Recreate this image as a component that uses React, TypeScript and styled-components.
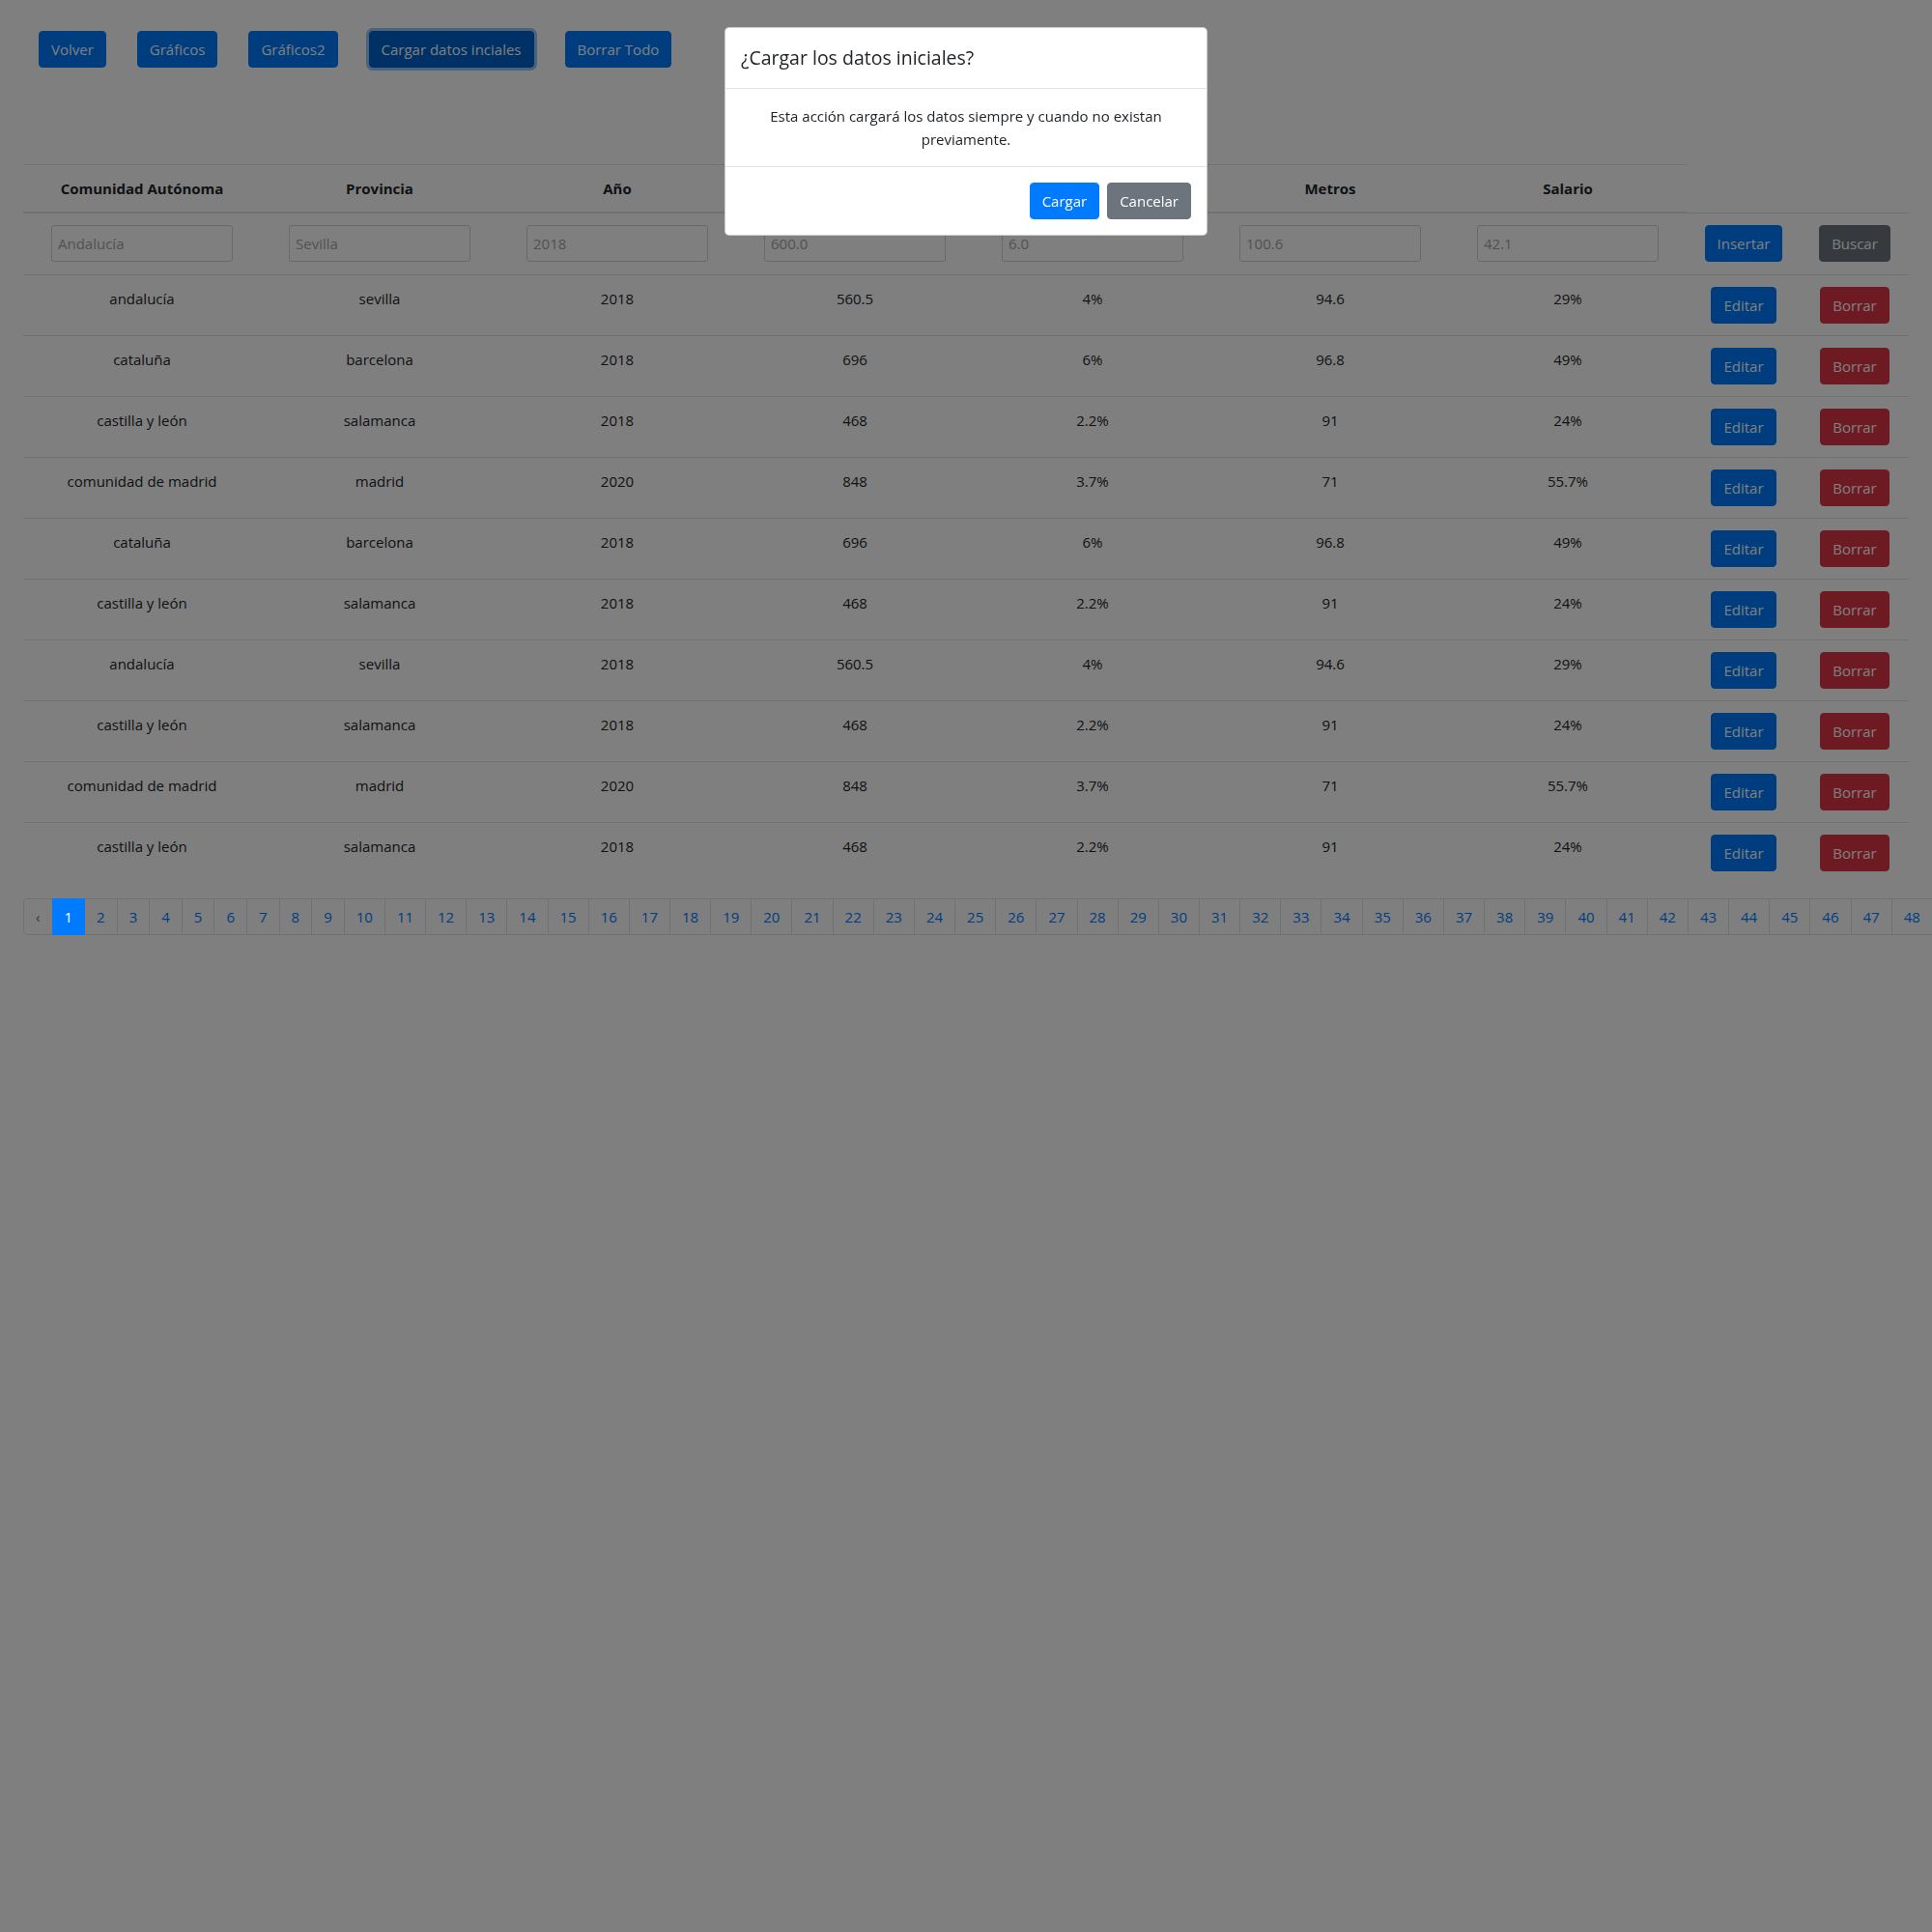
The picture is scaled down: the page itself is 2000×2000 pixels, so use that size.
import React from "react";
import styled, { createGlobalStyle, css } from "styled-components";

const GlobalStyle = createGlobalStyle`
  html, body {
    margin: 0;
    padding: 0;
    overflow: hidden;
    background: #ffffff;
  }
  body {
    font-family: "Open Sans", "Noto Sans", sans-serif;
    font-size: 15px;
    line-height: 24px;
    color: #212529;
  }
  * { box-sizing: border-box; }
`;

type Variant = "primary" | "secondary" | "danger";

const palette: Record<Variant, { bg: string; border: string }> = {
  primary: { bg: "#007bff", border: "#007bff" },
  secondary: { bg: "#6c757d", border: "#6c757d" },
  danger: { bg: "#dc3545", border: "#dc3545" },
};

const Page = styled.div`
  padding: 32px 24px 0;
  width: 2000px;
`;

const Toolbar = styled.div`
  display: flex;
  gap: 32px;
  padding-left: 16px;
`;

const Button = styled.button<{ $variant: Variant; $focused?: boolean }>`
  font-family: inherit;
  font-size: 15px;
  line-height: 24px;
  padding: 6px 12px;
  border-radius: 4px;
  border: 1px solid ${(p) => palette[p.$variant].border};
  background: ${(p) => palette[p.$variant].bg};
  color: #ffffff;
  white-space: nowrap;
  cursor: pointer;
  ${(p) =>
    p.$focused &&
    css`
      background: #0062cc;
      border-color: #005cbf;
      box-shadow: 0 0 0 3px rgba(38, 143, 255, 0.5);
    `}
`;

const DataTable = styled.table`
  margin-top: 100px;
  width: 1952px;
  table-layout: fixed;
  border-collapse: collapse;
  margin-bottom: 16px;
`;

const HeadCell = styled.th`
  padding: 12px;
  font-weight: 700;
  text-align: center;
  vertical-align: bottom;
  border-top: 1px solid #dee2e6;
  border-bottom: 2px solid #dee2e6;
`;

const Cell = styled.td`
  padding: 12px;
  text-align: center;
  vertical-align: top;
  border-top: 1px solid #dee2e6;
`;

const FilterCell = styled(Cell)`
  padding-bottom: 13px;
`;

const FilterInput = styled.input`
  width: 188px;
  height: 38px;
  padding: 0 6px;
  border: 1px solid #ced4da;
  border-radius: 3px;
  font-family: inherit;
  font-size: 15px;
  color: #495057;
  background: #ffffff;
  &::placeholder {
    color: #a3a3a3;
  }
`;

const Pagination = styled.ul`
  display: flex;
  list-style: none;
  margin: 0;
  padding: 0;
`;

const PageLink = styled.a<{ $active?: boolean; $disabled?: boolean; $first?: boolean }>`
  display: block;
  padding: 8px 12px;
  margin-left: ${(p) => (p.$first ? "0" : "-1px")};
  line-height: 20px;
  font-size: 15px;
  border: 1px solid #dee2e6;
  color: #007bff;
  background: #ffffff;
  text-decoration: none;
  white-space: nowrap;
  ${(p) =>
    p.$first &&
    css`
      border-top-left-radius: 4px;
      border-bottom-left-radius: 4px;
    `}
  ${(p) =>
    p.$disabled &&
    css`
      color: #6c757d;
    `}
  ${(p) =>
    p.$active &&
    css`
      position: relative;
      z-index: 1;
      color: #ffffff;
      background: #007bff;
      border-color: #007bff;
    `}
`;

const Backdrop = styled.div`
  position: fixed;
  inset: 0;
  background: rgba(0, 0, 0, 0.5);
`;

const ModalLayer = styled.div`
  position: fixed;
  inset: 0;
  display: flex;
  justify-content: center;
  align-items: flex-start;
  padding-top: 28px;
`;

const ModalDialog = styled.div`
  width: 500px;
  background: #ffffff;
  border: 1px solid rgba(0, 0, 0, 0.2);
  border-radius: 5px;
  overflow: hidden;
`;

const ModalHeader = styled.div`
  padding: 16px;
  border-bottom: 1px solid #dee2e6;
`;

const ModalTitle = styled.h5`
  margin: 0;
  font-size: 19.5px;
  line-height: 30px;
  font-weight: 500;
  color: #212529;
`;

const ModalBody = styled.div`
  padding: 16px;
  text-align: center;
  font-size: 15px;
  line-height: 24px;
`;

const ModalFooter = styled.div`
  display: flex;
  justify-content: flex-end;
  gap: 8px;
  padding: 16px;
  border-top: 1px solid #dee2e6;
`;

const columns = ["Comunidad Autónoma", "Provincia", "Año", "Precio", "Variación", "Metros", "Salario"];
const placeholders = ["Andalucía", "Sevilla", "2018", "600.0", "6.0", "100.6", "42.1"];

const rows: string[][] = [
  ["andalucía", "sevilla", "2018", "560.5", "4%", "94.6", "29%"],
  ["cataluña", "barcelona", "2018", "696", "6%", "96.8", "49%"],
  ["castilla y león", "salamanca", "2018", "468", "2.2%", "91", "24%"],
  ["comunidad de madrid", "madrid", "2020", "848", "3.7%", "71", "55.7%"],
  ["cataluña", "barcelona", "2018", "696", "6%", "96.8", "49%"],
  ["castilla y león", "salamanca", "2018", "468", "2.2%", "91", "24%"],
  ["andalucía", "sevilla", "2018", "560.5", "4%", "94.6", "29%"],
  ["castilla y león", "salamanca", "2018", "468", "2.2%", "91", "24%"],
  ["comunidad de madrid", "madrid", "2020", "848", "3.7%", "71", "55.7%"],
  ["castilla y león", "salamanca", "2018", "468", "2.2%", "91", "24%"],
];

const pages = Array.from({ length: 60 }, (_, i) => i + 1);

export default function App() {
  return (
    <>
      <GlobalStyle />
      <Page>
        <Toolbar>
          <Button $variant="primary">Volver</Button>
          <Button $variant="primary">Gráficos</Button>
          <Button $variant="primary">Gráficos2</Button>
          <Button $variant="primary" $focused>
            Cargar datos inciales
          </Button>
          <Button $variant="primary">Borrar Todo</Button>
        </Toolbar>

        <DataTable>
          <colgroup>
            {columns.map((c) => (
              <col key={c} style={{ width: 246 }} />
            ))}
            <col style={{ width: 118 }} />
            <col style={{ width: 112 }} />
          </colgroup>
          <thead>
            <tr>
              {columns.map((c) => (
                <HeadCell key={c}>{c}</HeadCell>
              ))}
            </tr>
          </thead>
          <tbody>
            <tr>
              {placeholders.map((p) => (
                <FilterCell key={p}>
                  <FilterInput placeholder={p} />
                </FilterCell>
              ))}
              <FilterCell>
                <Button $variant="primary">Insertar</Button>
              </FilterCell>
              <FilterCell>
                <Button $variant="secondary">Buscar</Button>
              </FilterCell>
            </tr>
            {rows.map((r, i) => (
              <tr key={i}>
                {r.map((v, j) => (
                  <Cell key={j}>{v}</Cell>
                ))}
                <Cell>
                  <Button $variant="primary">Editar</Button>
                </Cell>
                <Cell>
                  <Button $variant="danger">Borrar</Button>
                </Cell>
              </tr>
            ))}
          </tbody>
        </DataTable>

        <Pagination>
          <li>
            <PageLink $first $disabled>
              ‹
            </PageLink>
          </li>
          {pages.map((n) => (
            <li key={n}>
              <PageLink $active={n === 1}>{n}</PageLink>
            </li>
          ))}
        </Pagination>
      </Page>

      <Backdrop />
      <ModalLayer>
        <ModalDialog>
          <ModalHeader>
            <ModalTitle>¿Cargar los datos iniciales?</ModalTitle>
          </ModalHeader>
          <ModalBody>
            Esta acción cargará los datos siempre y cuando no existan previamente.
          </ModalBody>
          <ModalFooter>
            <Button $variant="primary">Cargar</Button>
            <Button $variant="secondary">Cancelar</Button>
          </ModalFooter>
        </ModalDialog>
      </ModalLayer>
    </>
  );
}
